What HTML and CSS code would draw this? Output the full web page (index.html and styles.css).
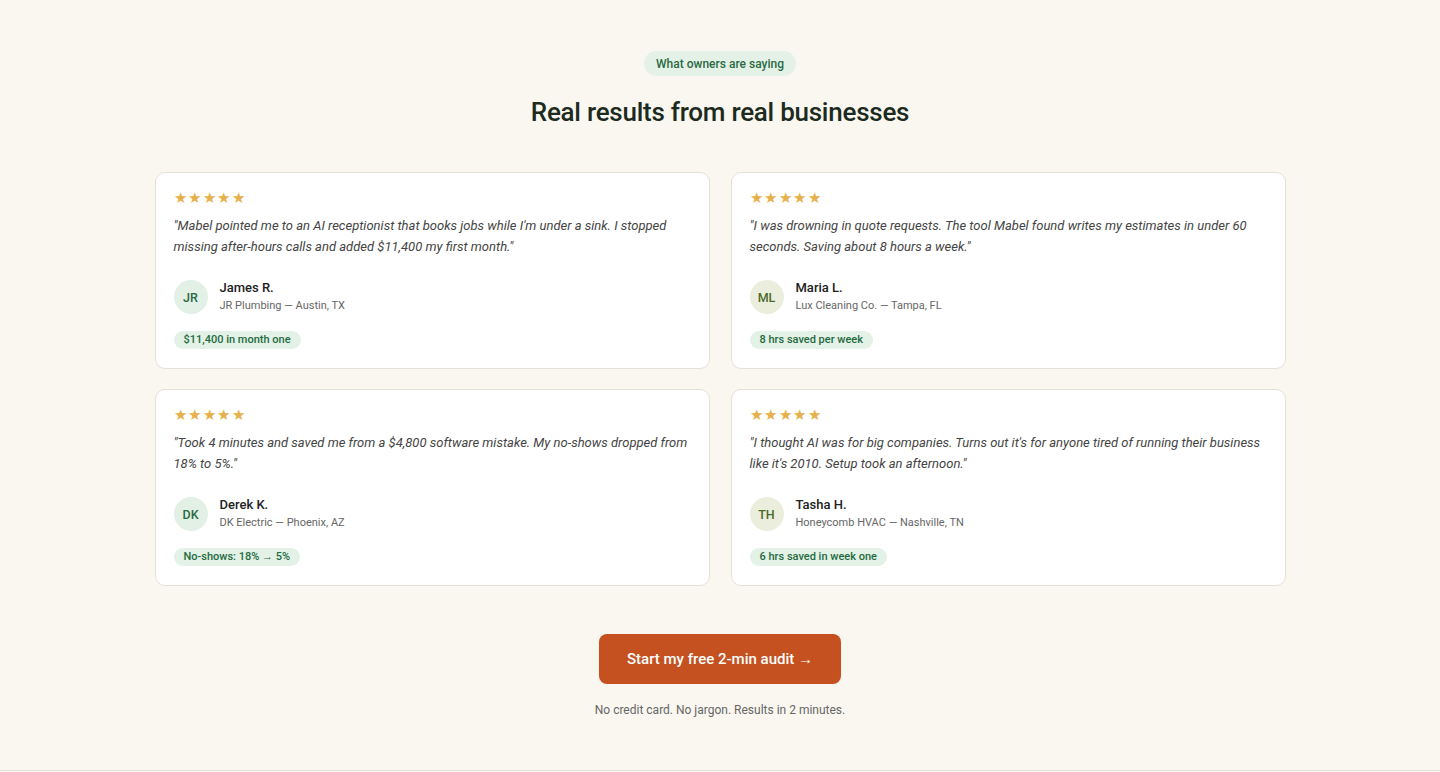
FILE: index.html
```html
<!DOCTYPE html>
<html lang="en">
<head>
<meta charset="utf-8">
<title>Testimonials</title>
<link rel="stylesheet" href="styles.css">
</head>
<body>
<section class="testimonials">
  <div class="head">
    <span class="eyebrow">What owners are saying</span>
    <h2 class="title">Real results from real businesses</h2>
  </div>
  <div class="grid">
    <article class="card">
      <div class="stars">★★★★★</div>
      <p class="quote">"Mabel pointed me to an AI receptionist that books jobs while I'm under a sink. I stopped missing after-hours calls and added $11,400 my first month."</p>
      <div class="person">
        <div class="avatar green">JR</div>
        <div class="who">
          <div class="name">James R.</div>
          <div class="biz">JR Plumbing — Austin, TX</div>
        </div>
      </div>
      <span class="result">$11,400 in month one</span>
    </article>
    <article class="card">
      <div class="stars">★★★★★</div>
      <p class="quote">"I was drowning in quote requests. The tool Mabel found writes my estimates in under 60 seconds. Saving about 8 hours a week."</p>
      <div class="person">
        <div class="avatar olive">ML</div>
        <div class="who">
          <div class="name">Maria L.</div>
          <div class="biz">Lux Cleaning Co. — Tampa, FL</div>
        </div>
      </div>
      <span class="result">8 hrs saved per week</span>
    </article>
    <article class="card">
      <div class="stars">★★★★★</div>
      <p class="quote">"Took 4 minutes and saved me from a $4,800 software mistake. My no-shows dropped from 18% to 5%."</p>
      <div class="person">
        <div class="avatar green">DK</div>
        <div class="who">
          <div class="name">Derek K.</div>
          <div class="biz">DK Electric — Phoenix, AZ</div>
        </div>
      </div>
      <span class="result">No-shows: 18% → 5%</span>
    </article>
    <article class="card">
      <div class="stars">★★★★★</div>
      <p class="quote">"I thought AI was for big companies. Turns out it's for anyone tired of running their business like it's 2010. Setup took an afternoon."</p>
      <div class="person">
        <div class="avatar olive">TH</div>
        <div class="who">
          <div class="name">Tasha H.</div>
          <div class="biz">Honeycomb HVAC — Nashville, TN</div>
        </div>
      </div>
      <span class="result">6 hrs saved in week one</span>
    </article>
  </div>
  <div class="cta">
    <a class="button" href="#">Start my free 2-min audit →</a>
    <p class="note">No credit card. No jargon. Results in 2 minutes.</p>
  </div>
</section>
</body>
</html>
```

FILE: styles.css
```css
* { box-sizing: border-box; }
html, body { margin: 0; padding: 0; }
body {
  background: #faf7f1;
  font-family: Roboto, "Liberation Sans", sans-serif;
  color: #1f2a22;
}
.testimonials {
  padding: 51px 0 0;
  height: 771px;
  border-bottom: 1px solid #e6e1d6;
}
.head {
  display: flex;
  flex-direction: column;
  align-items: center;
}
.eyebrow {
  display: inline-block;
  background: #e4f1e7;
  color: #2b6a44;
  font-size: 12px;
  font-weight: 500;
  line-height: 24px;
  height: 25px;
  padding: 1px 12px 0;
  border-radius: 13px;
}
.title {
  margin: 20px 0 0;
  font-size: 26px;
  font-weight: 500;
  line-height: 32px;
  color: #1c2a20;
  letter-spacing: -0.25px;
}
.grid {
  width: 1131px;
  margin: 44px auto 0;
  display: grid;
  grid-template-columns: 1fr 1fr;
  gap: 20px 21px;
}
.card {
  background: #fff;
  border: 1px solid #e6e1d6;
  border-radius: 10px;
  padding: 16px 18px 19px;
  display: flex;
  flex-direction: column;
  align-items: flex-start;
}
.stars {
  color: #e6b04a;
  font-size: 15px;
  letter-spacing: 1.6px;
  line-height: 18px;
}
.quote {
  margin: 8px 0 0;
  font-size: 13px;
  font-style: italic;
  line-height: 21px;
  color: #444;
}
.person {
  display: flex;
  align-items: center;
  gap: 12px;
  margin-top: 23px;
}
.avatar {
  width: 34px;
  height: 34px;
  border-radius: 50%;
  display: flex;
  align-items: center;
  justify-content: center;
  font-size: 12.5px;
  font-weight: 500;
}
.avatar.green { background: #e2f0e6; color: #2a6a43; }
.avatar.olive { background: #ebeedc; color: #4b6a2b; }
.who { display: flex; flex-direction: column; }
.name {
  font-size: 13px;
  font-weight: 500;
  color: #222;
  line-height: 15px;
}
.biz {
  margin-top: 3px;
  font-size: 11px;
  color: #666;
  line-height: 16px;
}
.result {
  margin-top: 17px;
  background: #e3f1e7;
  color: #1f6a3e;
  font-size: 11px;
  font-weight: 500;
  line-height: 18px;
  height: 18px;
  padding: 0 10px;
  border-radius: 9px;
}
.cta {
  display: flex;
  flex-direction: column;
  align-items: center;
  margin-top: 48px;
}
.button {
  display: inline-flex;
  align-items: center;
  justify-content: center;
  width: 242px;
  height: 50px;
  background: #c4511f;
  color: #fff;
  font-size: 15px;
  font-weight: 500;
  text-decoration: none;
  border-radius: 8px;
}
.note {
  margin: 19px 0 0;
  font-size: 12px;
  color: #666;
  line-height: 14px;
}
```
